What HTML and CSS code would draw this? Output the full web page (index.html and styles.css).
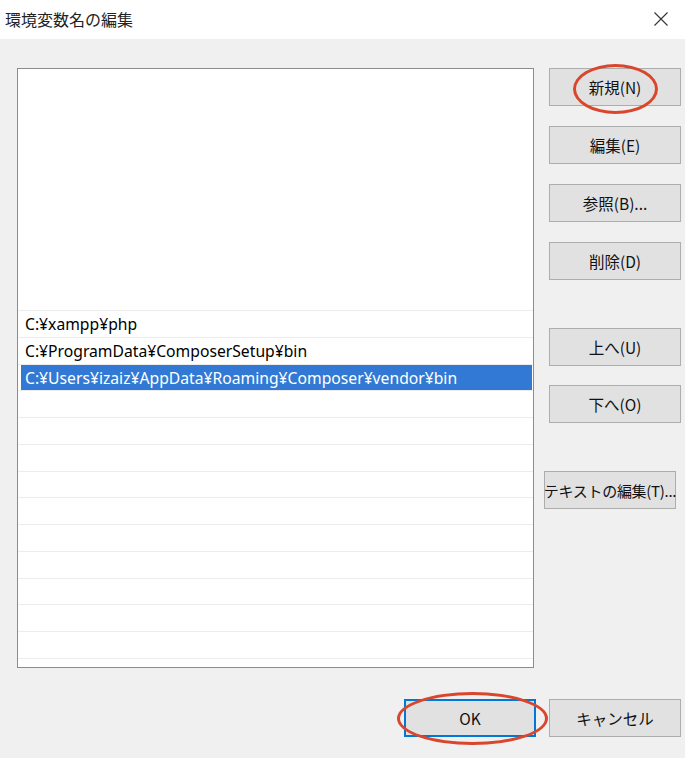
FILE: index.html
```html
<!DOCTYPE html>
<html lang="ja">
<head>
<meta charset="utf-8">
<title>環境変数名の編集</title>
<link rel="stylesheet" href="styles.css">
</head>
<body>
<div class="dialog">
  <header class="titlebar">
    <span class="title">環境変数名の編集</span>
    <svg class="close" width="14" height="14" viewBox="0 0 14 14"><path d="M0.5 0.5 L13.5 13.5 M13.5 0.5 L0.5 13.5" stroke="#333" stroke-width="1.1" fill="none"/></svg>
  </header>
  <main class="content">
    <div class="top">
      <div class="list">
        <div class="spacer"></div>
        <div class="row">C:¥xampp¥php</div>
        <div class="row">C:¥ProgramData¥ComposerSetup¥bin</div>
        <div class="row selected"><span class="sel">C:¥Users¥izaiz¥AppData¥Roaming¥Composer¥vendor¥bin</span></div>
        <div class="row"></div>
        <div class="row"></div>
        <div class="row"></div>
        <div class="row"></div>
        <div class="row"></div>
        <div class="row"></div>
        <div class="row"></div>
        <div class="row"></div>
        <div class="row"></div>
        <div class="row"></div>
        <div class="row"></div>
      </div>
      <div class="side">
        <div class="group g1">
          <button class="btn mark-wrap">新規(N)<span class="mark mark-new"></span></button>
          <button class="btn">編集(E)</button>
          <button class="btn">参照(B)...</button>
          <button class="btn">削除(D)</button>
        </div>
        <div class="group g2">
          <button class="btn">上へ(U)</button>
          <button class="btn">下へ(O)</button>
        </div>
        <button class="btn text-edit">テキストの編集(T)...</button>
      </div>
    </div>
    <div class="bottom">
      <button class="btn ok mark-wrap">OK<span class="mark mark-ok"></span></button>
      <button class="btn">キャンセル</button>
    </div>
  </main>
</div>
</body>
</html>
```
FILE: styles.css
```css
* { box-sizing: border-box; }
html, body { margin: 0; padding: 0; background: #ffffff; }
body {
  font-family: "Noto Sans", "Noto Sans CJK JP", sans-serif;
  color: #000;
  width: 688px;
  height: 758px;
  overflow: hidden;
}
.dialog {
  width: 685px;
  height: 758px;
  display: flex;
  flex-direction: column;
}
.titlebar {
  height: 39px;
  background: #fff;
  display: flex;
  align-items: center;
  justify-content: space-between;
  padding: 0 17px 2px 5px;
  flex: none;
}
.title {
  font-family: "Noto Sans CJK JP", sans-serif;
  font-size: 16px;
  color: #222;
}
.content {
  flex: 1;
  background: #f0f0f0;
  padding: 29px 4px 0 17px;
  display: flex;
  flex-direction: column;
}
.top {
  display: flex;
  gap: 15px;
}
.list {
  width: 517px;
  height: 600px;
  border: 1px solid #8c8c8c;
  background: #fff;
  overflow: hidden;
  display: flex;
  flex-direction: column;
}
.spacer { height: 241px; flex: none; }
.row {
  flex: none;
  height: 26.75px;
  border-top: 1px solid #ececec;
  font-size: 15.7px;
  line-height: 27px;
  padding-left: 7px;
  white-space: nowrap;
}
.row.selected {
  padding: 0 1px 0 3px;
}
.sel {
  display: block;
  height: 26px;
  background: #3179d4;
  color: #fff;
  padding-left: 4px;
  line-height: 26px;
}
.side {
  display: flex;
  flex-direction: column;
  width: 132px;
}
.group { display: flex; flex-direction: column; }
.g1 { gap: 20px; }
.g2 { gap: 19px; margin-top: 48px; }
.btn {
  position: relative;
  width: 132px;
  height: 38px;
  background: #e1e1e1;
  border: 1px solid #adadad;
  font-family: "Noto Sans CJK JP", sans-serif;
  font-size: 15.5px;
  color: #111;
  padding: 0;
  margin: 0;
  display: flex;
  align-items: center;
  justify-content: center;
}
.text-edit {
  margin-top: 48px;
  margin-left: -5px;
  white-space: nowrap;
  font-size: 15px;
  letter-spacing: -0.3px;
}
.bottom {
  display: flex;
  justify-content: flex-end;
  gap: 13px;
  margin-top: 31px;
}
.ok {
  border: 1px solid #0078d7;
  box-shadow: inset 0 0 0 1px #0078d7;
}
.mark {
  position: absolute;
  border: 3.5px solid #d9462c;
  border-radius: 50%;
  pointer-events: none;
}
.mark-new {
  left: 23px;
  top: -5px;
  width: 85px;
  height: 50px;
}
.mark-ok {
  left: -8px;
  top: -8px;
  width: 151px;
  height: 53px;
}
```
